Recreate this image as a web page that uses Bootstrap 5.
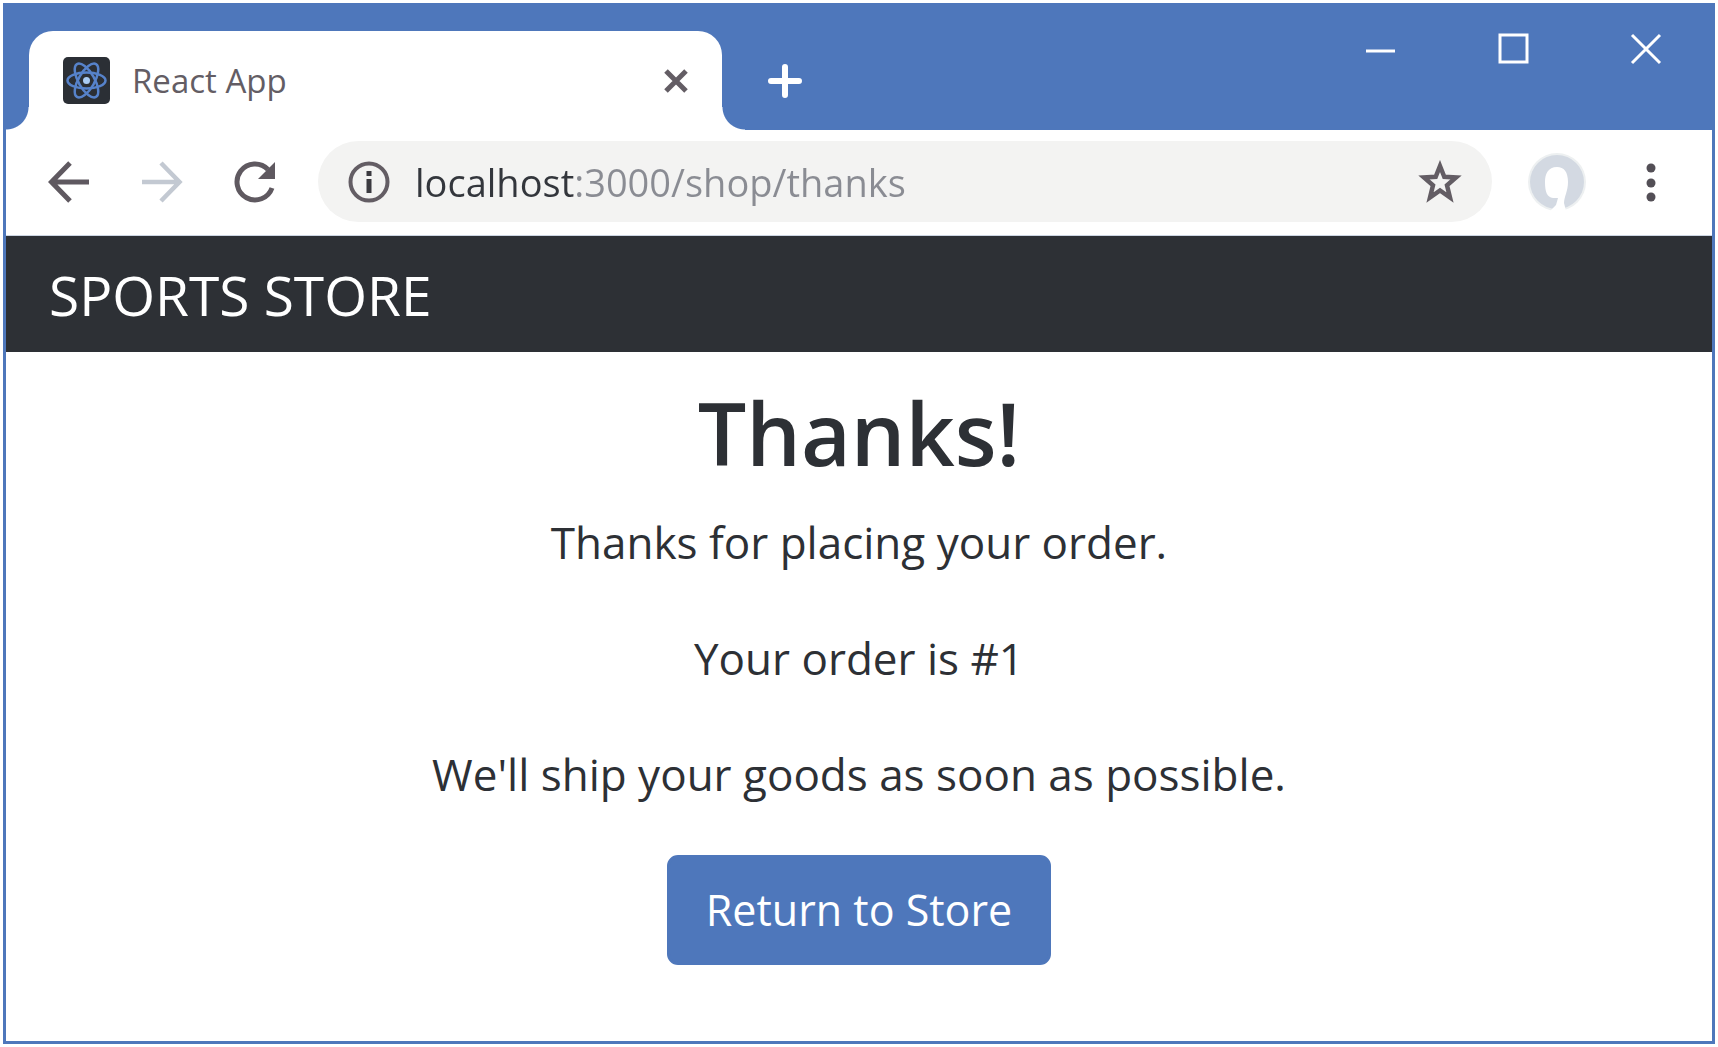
<!DOCTYPE html>
<html lang="en">
<head>
<meta charset="utf-8">
<meta name="viewport" content="width=device-width, initial-scale=1">
<title>React App</title>
<link href="https://cdn.jsdelivr.net/npm/bootstrap@5.3.0/dist/css/bootstrap.min.css" rel="stylesheet">
<style>
  :root { --frame: #4e77bb; --ink: #2d3035; --glyph: #635d64; }
  body { font-family: "Open Sans", "Noto Sans", sans-serif; color: var(--ink); background: #fff; padding: 3px; }
  svg { display: block; flex: none; }
  .app-window { min-height: calc(100vh - 6px); border: 3px solid var(--frame); }
  .title-strip { background: var(--frame); height: 124px; padding: 25px 36px 0 23px; }
  .tab-shape { position: relative; width: 693px; height: 99px; background: #fff; border-radius: 24px 24px 0 0; padding: 0 27px 0 34px; gap: 22px; }
  .tab-shape::before, .tab-shape::after { content: ""; position: absolute; bottom: 0; width: 23px; height: 23px; }
  .tab-shape::before { right: 100%; background: radial-gradient(circle at 0 0, transparent 22px, #fff 23px); }
  .tab-shape::after { left: 100%; background: radial-gradient(circle at 100% 0, transparent 22px, #fff 23px); }
  .tab-title { font-size: 33px; line-height: 48px; color: var(--glyph); }
  .bare-btn { border: 0; background: none; padding: 0; color: inherit; }
  .new-tab { margin-left: 45px; }
  .win-controls { gap: 101px; height: 36px; margin-right: 14px; color: #fff; }
  .tool-row { height: 106px; padding: 0 56px 2px 42px; color: var(--glyph); border-bottom: 1px solid #ccd5e2; }
  .nav-arrows { gap: 51px; margin-right: 42px; }
  .address-pill { height: 81px; border-radius: 41px; background: #f3f3f2; padding: 0 30px; gap: 25px; }
  .address-box { border: 0; outline: 0; padding: 0; min-width: 0; font-size: 38px; line-height: 56px; color: transparent; background: linear-gradient(90deg, #33363c 159px, #8a8c93 159px); -webkit-background-clip: text; background-clip: text; }
  .tool-end { gap: 60px; margin-left: 36px; }
  .store-bar { background: var(--ink); height: 116px; padding: 2px 43px 0; }
  .store-bar .navbar-brand { font-size: 55px; line-height: 72px; padding: 0; margin: 0; color: #fff; }
  .thanks-pane { padding: 26px 24px; font-size: 44px; line-height: 70px; }
  .thanks-pane h2 { font-size: 86px; font-weight: 600; line-height: 110px; margin-bottom: 19px; }
  .thanks-pane p { margin-bottom: 46px; }
  .store-btn { --bs-btn-bg: var(--frame); --bs-btn-border-color: var(--frame); --bs-btn-color: #fff; --bs-btn-hover-bg: #3f67aa; --bs-btn-hover-color: #fff; font-size: 43px; line-height: 70px; padding: 17px 36px; border-width: 3px; border-radius: 11px; }
</style>
</head>
<body>
<div class="app-window d-flex flex-column">
  <header>
    <div class="title-strip d-flex align-items-start">
      <div class="tab-shape d-flex align-items-center">
        <svg width="47" height="47" viewBox="0 0 47 47" fill="none" aria-hidden="true">
          <rect width="47" height="47" rx="5" fill="#2b2f35"/>
          <g stroke="#5682ca" stroke-width="2.500">
            <ellipse cx="23.500" cy="23.500" rx="19" ry="8"/>
            <ellipse cx="23.500" cy="23.500" rx="19" ry="8" transform="rotate(60 23.500 23.500)"/>
            <ellipse cx="23.500" cy="23.500" rx="19" ry="8" transform="rotate(120 23.500 23.500)"/>
          </g>
          <circle cx="23.500" cy="23.500" r="3.500" fill="#a9cbf3"/>
        </svg>
        <span class="tab-title flex-grow-1">React App</span>
        <button class="bare-btn" type="button" aria-label="Close tab">
          <svg width="38" height="38" viewBox="0 0 38 38" stroke="#635d64" stroke-width="5"><path d="M9 9 29 29M29 9 9 29"/></svg>
        </button>
      </div>
      <button class="bare-btn new-tab align-self-center" type="button" aria-label="New tab">
        <svg width="36" height="36" viewBox="0 0 36 36" stroke="#fff" stroke-width="6" stroke-linecap="round"><path d="M18 4V32M4 18H32"/></svg>
      </button>
      <div class="win-controls d-flex align-items-center ms-auto">
        <button class="bare-btn" type="button" aria-label="Minimize"><svg width="32" height="32" viewBox="0 0 32 32" stroke="#fff" stroke-width="3"><path d="M2 18H31"/></svg></button>
        <button class="bare-btn" type="button" aria-label="Maximize"><svg width="32" height="32" viewBox="0 0 32 32" fill="none" stroke="#fff" stroke-width="3"><rect x="3" y="2" width="27" height="27"/></svg></button>
        <button class="bare-btn" type="button" aria-label="Close"><svg width="32" height="32" viewBox="0 0 32 32" stroke="#fff" stroke-width="3"><path d="M2 2 30 30M30 2 2 30"/></svg></button>
      </div>
    </div>
    <div class="tool-row d-flex align-items-center">
      <div class="nav-arrows d-flex align-items-center">
        <button class="bare-btn" type="button" aria-label="Back"><svg width="42" height="42" viewBox="0 0 42 42" fill="none" stroke="#5f5960" stroke-width="5"><path d="M22 2 3.500 21 22 40M4 21H41"/></svg></button>
        <button class="bare-btn" type="button" aria-label="Forward"><svg width="42" height="42" viewBox="0 0 42 42" fill="none" stroke="#c3c9d2" stroke-width="4.500"><path d="M20 2 38.500 21 20 40M38 21H1"/></svg></button>
        <button class="bare-btn" type="button" aria-label="Reload"><svg width="42" height="42" viewBox="0 0 42 42" fill="none" stroke="#5f5960" stroke-width="5"><path d="M38 27A18 18 0 1 1 34 8.500"/><path d="M41 1V18H24Z" fill="#5f5960" stroke="none"/></svg></button>
      </div>
      <div class="address-pill d-flex align-items-center flex-grow-1">
        <svg width="42" height="42" viewBox="0 0 42 42" fill="none" aria-hidden="true"><circle cx="21" cy="21" r="18.500" stroke="#635d64" stroke-width="4"/><path d="M21 18V32M21 10V15" stroke="#3b3a40" stroke-width="5"/></svg>
        <input class="address-box flex-grow-1" type="text" value="localhost:3000/shop/thanks" aria-label="Address">
        <button class="bare-btn" type="button" aria-label="Bookmark"><svg width="44" height="44" viewBox="0 0 44 44" fill="none" stroke="#635d64" stroke-width="4.500"><path d="M22 6 26.300 16.800 38 17.500 29 25.200 32 37.500 22 30.500 12 37.500 15 25.200 6 17.500 17.700 16.800Z"/></svg></button>
      </div>
      <div class="tool-end d-flex align-items-center">
        <button class="bare-btn" type="button" aria-label="Profile"><svg width="58" height="58" viewBox="0 0 58 58"><circle cx="29" cy="29" r="29" fill="#edf0f1"/><circle cx="29" cy="29" r="27" fill="#d3d9e2"/><path d="M29 14C20 14 17 21 17 29 17 39 19 44 25 45H30L28 52 22 58H38L36 50C36 44 40 38 40 29 40 19 36 14 29 14Z" fill="#fff"/></svg></button>
        <button class="bare-btn" type="button" aria-label="Menu"><svg width="10" height="40" viewBox="0 0 10 40" fill="#534f56"><circle cx="5" cy="6" r="4.500"/><circle cx="5" cy="21" r="4.500"/><circle cx="5" cy="35" r="4.500"/></svg></button>
      </div>
    </div>
  </header>
  <nav class="store-bar navbar"><span class="navbar-brand">SPORTS STORE</span></nav>
  <main class="thanks-pane text-center">
    <h2>Thanks!</h2>
    <p>Thanks for placing your order.</p>
    <p>Your order is #1</p>
    <p>We'll ship your goods as soon as possible.</p>
    <a class="btn store-btn" href="#">Return to Store</a>
  </main>
</div>
<script src="https://cdn.jsdelivr.net/npm/bootstrap@5.3.0/dist/js/bootstrap.bundle.min.js"></script>
</body>
</html>
